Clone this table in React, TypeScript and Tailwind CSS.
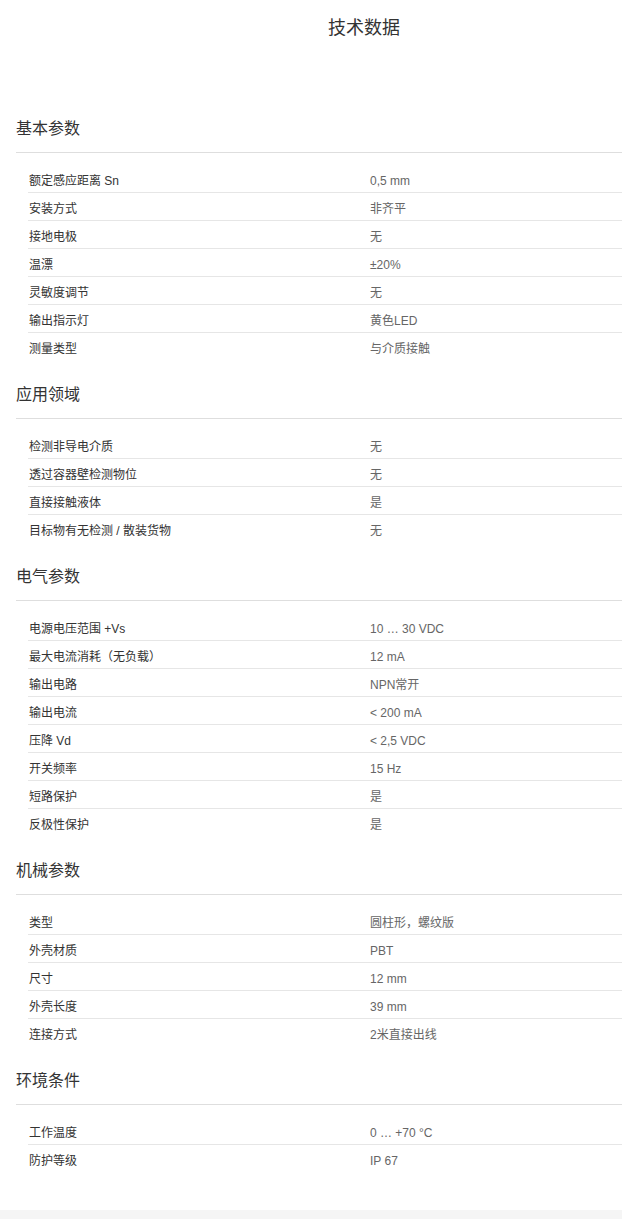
import React from "react";

type Row = [string, string];
type Section = { title: string; rows: Row[] };

const sections: Section[] = [
  {
    title: "基本参数",
    rows: [
      ["额定感应距离 Sn", "0,5 mm"],
      ["安装方式", "非齐平"],
      ["接地电极", "无"],
      ["温漂", "±20%"],
      ["灵敏度调节", "无"],
      ["输出指示灯", "黄色LED"],
      ["测量类型", "与介质接触"],
    ],
  },
  {
    title: "应用领域",
    rows: [
      ["检测非导电介质", "无"],
      ["透过容器壁检测物位", "无"],
      ["直接接触液体", "是"],
      ["目标物有无检测 / 散装货物", "无"],
    ],
  },
  {
    title: "电气参数",
    rows: [
      ["电源电压范围 +Vs", "10 … 30 VDC"],
      ["最大电流消耗（无负载）", "12 mA"],
      ["输出电路", "NPN常开"],
      ["输出电流", "< 200 mA"],
      ["压降 Vd", "< 2,5 VDC"],
      ["开关频率", "15 Hz"],
      ["短路保护", "是"],
      ["反极性保护", "是"],
    ],
  },
  {
    title: "机械参数",
    rows: [
      ["类型", "圆柱形，螺纹版"],
      ["外壳材质", "PBT"],
      ["尺寸", "12 mm"],
      ["外壳长度", "39 mm"],
      ["连接方式", "2米直接出线"],
    ],
  },
  {
    title: "环境条件",
    rows: [
      ["工作温度", "0 … +70 °C"],
      ["防护等级", "IP 67"],
    ],
  },
];

export default function App() {
  return (
    <div
      className="w-[622px] bg-white text-[#333]"
      style={{ fontFamily: '"Liberation Sans", "Noto Sans CJK SC", sans-serif' }}
    >
      <h1 className="pt-[16px] text-center text-[18px] leading-[24px] font-normal text-[#333] pl-[106px]">
        技术数据
      </h1>
      <div className="pl-4 pt-[54px] pb-[38px]">
        {sections.map((s) => (
          <section key={s.title} className="mt-[23px]">
            <h2 className="text-[16px] leading-[24px] font-normal text-[#333] pb-[11px] border-b border-[#dedede]">
              {s.title}
            </h2>
            <div className="pl-3 pt-[11px]">
              {s.rows.map(([k, v], i) => (
                <div
                  key={k}
                  className={`flex pt-[6px] pb-[1px] text-[12px] leading-[20px] border-t ${
                    i === 0 ? "border-transparent" : "border-[#e6e6e6]"
                  }`}
                >
                  <div className="w-[342px] pl-[1px] text-[#333]">{k}</div>
                  <div className="text-[#666]">{v}</div>
                </div>
              ))}
            </div>
          </section>
        ))}
      </div>
      <div className="h-[20px] bg-[#f5f5f5]" />
    </div>
  );
}
